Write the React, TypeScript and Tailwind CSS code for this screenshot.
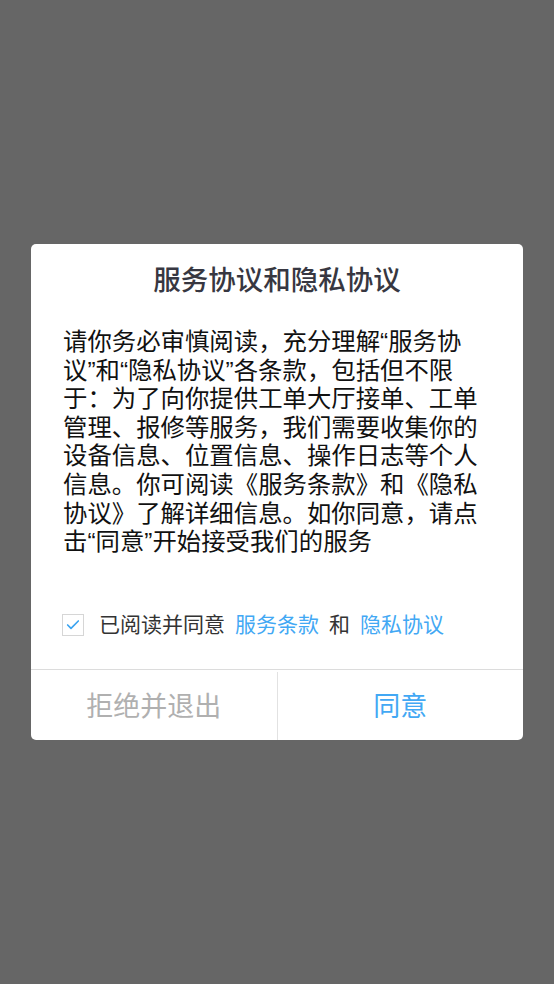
import { Check } from "lucide-react";

const BODY_LINES = [
  "请你务必审慎阅读，充分理解“服务协",
  "议”和“隐私协议”各条款，包括但不限",
  "于：为了向你提供工单大厅接单、工单",
  "管理、报修等服务，我们需要收集你的",
  "设备信息、位置信息、操作日志等个人",
  "信息。你可阅读《服务条款》和《隐私",
  "协议》了解详细信息。如你同意，请点",
  "击“同意”开始接受我们的服务",
];

const font = { fontFamily: '"Liberation Sans", "Noto Sans CJK SC", sans-serif' };

export default function App() {
  return (
    <div className="flex h-[984px] w-[554px] items-start justify-center bg-[#666666]" style={font}>
      <div className="mt-[244px] w-[492px] overflow-hidden rounded-[5px] bg-white">
        <h2 className="pt-[18px] text-center text-[27.5px] font-medium leading-[38px] text-[#373741]">
          服务协议和隐私协议
        </h2>

        <p className="mt-[28px] whitespace-nowrap px-8 text-[24.4px] leading-[28.6px] text-[#111111]">
          {BODY_LINES.map((line, i) => (
            <span key={i}>
              {line}
              {i < BODY_LINES.length - 1 && <br />}
            </span>
          ))}
        </p>

        <div className="mt-[54px] flex items-center pl-[31px] text-[21px] leading-[28px]">
          <span className="flex h-[22px] w-[22px] items-center justify-center border border-[#d6d6d6] bg-white">
            <Check className="h-[16px] w-[16px] text-[#3ba4f1]" strokeWidth={2.5} />
          </span>
          <span className="ml-[15px] text-[#333333]">已阅读并同意</span>
          <span className="ml-[10px] text-[#42a8f4]">服务条款</span>
          <span className="ml-[10px] text-[#333333]">和</span>
          <span className="ml-[10px] text-[#42a8f4]">隐私协议</span>
        </div>

        <div className="mt-[30px] flex h-[71px] border-t border-[#dcdcdc]">
          <button className="flex flex-1 items-center justify-center pt-[4px] text-[27px] text-[#b0b0b0]">
            拒绝并退出
          </button>
          <div className="mt-[2px] w-px bg-[#e2e2e2]" />
          <button className="flex flex-1 items-center justify-center pt-[4px] text-[27px] text-[#42a8f4]">
            同意
          </button>
        </div>
      </div>
    </div>
  );
}
